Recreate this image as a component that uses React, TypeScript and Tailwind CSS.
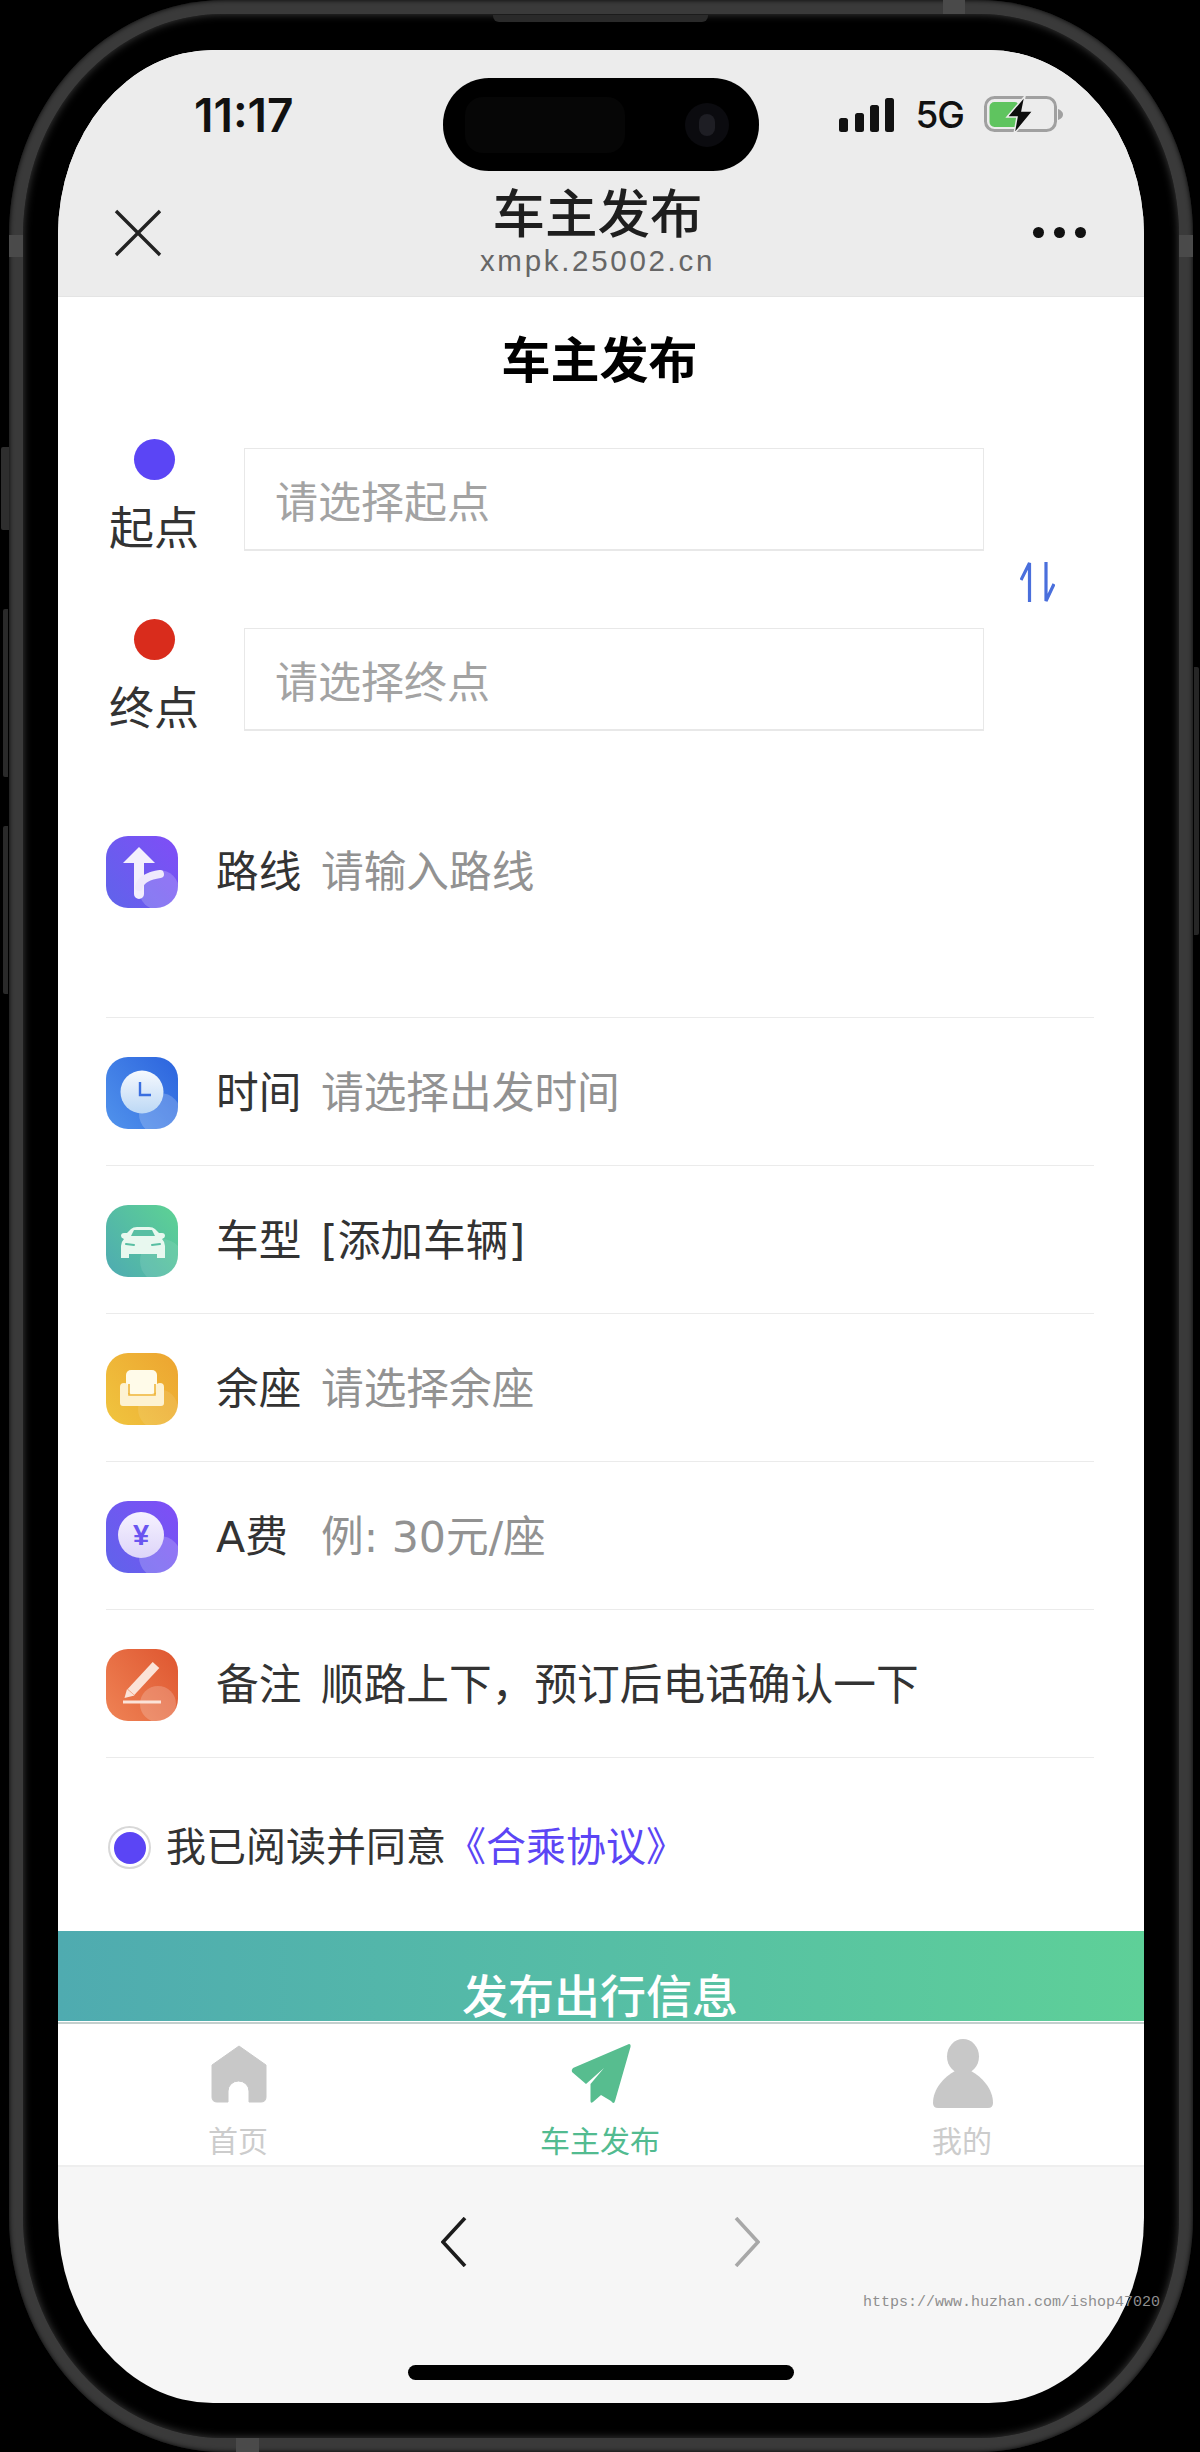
import React from "react";

function Tile({ id, from, to, overlay, cx, cy, r, children }: { id: string; from: string; to: string; overlay: number; cx: number; cy: number; r: number; children: React.ReactNode }) {
  return (
    <svg width="72" height="72" viewBox="0 0 72 72" className="shrink-0">
      <defs>
        <linearGradient id={id} x1="0" y1="1" x2="1" y2="0.2">
          <stop offset="0" stopColor={from} />
          <stop offset="1" stopColor={to} />
        </linearGradient>
        <clipPath id={id + "c"}>
          <rect width="72" height="72" rx="22" />
        </clipPath>
      </defs>
      <rect width="72" height="72" rx="22" fill={`url(#${id})`} />
      <g clipPath={`url(#${id}c)`}>
        <circle cx={cx} cy={cy} r={r} fill="#fff" opacity={overlay} />
      </g>
      {children}
    </svg>
  );
}

const RouteIcon = () => (
  <Tile id="t1" from="#5f64ea" to="#7d4ff6" overlay={0.2} cx={53} cy={54} r={20}>
    <path d="M33 11 L49 27 H38 V58 a5 5 0 0 1 -10 0 V27 H17 Z" fill="#f3effd" strokeLinejoin="round" />
    <path d="M33 51 Q35 41 54 38" fill="none" stroke="#efe9fc" strokeWidth="8" strokeLinecap="round" />
  </Tile>
);
const ClockIcon = () => (
  <Tile id="t2" from="#5193ec" to="#2f68df" overlay={0.2} cx={54} cy={57} r={21}>
    <defs>
      <linearGradient id="t2f" x1="0" y1="0" x2="0" y2="1">
        <stop offset="0" stopColor="#f6f9fe" />
        <stop offset="1" stopColor="#bcd8f5" />
      </linearGradient>
    </defs>
    <circle cx="36" cy="35" r="21.5" fill="url(#t2f)" />
    <path d="M34 25 V38 H45" fill="none" stroke="#3a6fe0" strokeWidth="2.4" />
  </Tile>
);
const CarIcon = () => (
  <Tile id="t3" from="#4eaab2" to="#5ccf96" overlay={0.1} cx={56} cy={56} r={22}>
    <path d="M15 31 Q15 28 18 28 H21 L25 24 Q27 22 31 22 H43 Q47 22 49 24 L53 28 H56 Q59 28 59 31 Q59 33 56 34 Q59 37 59 41 V53 H51 V49 H23 V53 H15 V41 Q15 37 18 34 Q15 33 15 31 Z" fill="#e8f8ef" />
    <path d="M25 31 L28 25 H46 L49 31 Z" fill="#58bfa3" />
    <path d="M20 39 L28 40 M46 40 L54 39" stroke="#58bfa3" strokeWidth="2" strokeLinecap="round" />
  </Tile>
);
const SofaIcon = () => (
  <Tile id="t4" from="#f0c53f" to="#eda731" overlay={0.1} cx={52} cy={56} r={20}>
    <rect x="20" y="17" width="31" height="24" rx="5" fill="#fffbe9" />
    <path d="M14 34 Q14 30 18 30 Q22 30 22 34 V41 H50 V34 Q50 30 54 30 Q58 30 58 34 V50 Q58 53 55 53 H17 Q14 53 14 50 Z" fill="#fdf2d2" />
    <path d="M23 31 V42 H49 V31" fill="none" stroke="#efb63c" strokeWidth="1.6" />
  </Tile>
);
const YenIcon = () => (
  <Tile id="t5" from="#5f64ea" to="#7d4ff6" overlay={0.2} cx={54} cy={56} r={21}>
    <defs>
      <linearGradient id="t5f" x1="0" y1="0" x2="0" y2="1">
        <stop offset="0" stopColor="#f6f2ff" />
        <stop offset="1" stopColor="#ddd5f9" />
      </linearGradient>
    </defs>
    <circle cx="35" cy="34" r="23" fill="url(#t5f)" />
    <text x="35" y="44" textAnchor="middle" fontSize="29" fontWeight="700" fill="#6a55f0" fontFamily="'Liberation Sans',sans-serif">¥</text>
  </Tile>
);
const PenIcon = () => (
  <Tile id="t6" from="#ef8355" to="#e05a33" overlay={0.2} cx={52} cy={55} r={18}>
    <path d="M50 16 L25 43" stroke="#fbe3d8" strokeWidth="9" strokeLinecap="butt" />
    <path d="M18.5 49 L21 40 L28.5 46.5 Z" fill="#fbe3d8" />
    <path d="M17 53 H55" stroke="#fbe3d8" strokeWidth="3" />
  </Tile>
);

function Row({ icon, label, value, dark, first }: { icon: React.ReactNode; label: string; value: string; dark?: boolean; first?: boolean }) {
  return (
    <div className={first ? "h-[182px] border-b border-[#ebebeb]" : "h-[148px] pt-[39px] border-b border-[#ebebeb]"}>
      <div className="flex items-center h-[72px] font-['DejaVu_Sans','Noto_Sans_CJK_SC',sans-serif]">
        {icon}
        <div className="ml-[38px] w-[105px] shrink-0 text-[42.7px] leading-[60px] text-[#333]">{label}</div>
        <div className={dark ? "text-[42.7px] leading-[60px] text-[#333] whitespace-nowrap" : "text-[42.7px] leading-[60px] text-[#929292] whitespace-nowrap"}>{value}</div>
      </div>
    </div>
  );
}

function Place({ dot, label, placeholder, spaced }: { dot: string; label: string; placeholder: string; spaced?: boolean }) {
  return (
    <div className={spaced ? "flex items-start mt-[68px]" : "flex items-start"}>
      <div className="w-[90px] flex flex-col items-center shrink-0">
        <div className={dot + " w-[41px] h-[41px] rounded-full"} />
        <div className="mt-[23px] text-[45px] leading-[46px] text-[#333] whitespace-nowrap">{label}</div>
      </div>
      <div className="ml-[45px] mt-[9px] w-[740px] h-[103px] border border-b-2 border-[#e8e8e8] pl-[30px] flex items-center text-[43px] text-[#a3a3a3]">
        {placeholder}
      </div>
    </div>
  );
}

function Tab({ label, active, children }: { label: string; active?: boolean; children: React.ReactNode }) {
  return (
    <div className="flex-1 flex flex-col items-center pt-[15px]">
      <div className="w-[70px] h-[70px]">{children}</div>
      <div className={active ? "mt-[15px] mr-[2px] text-[30px] leading-[30px] text-[#52bb90]" : "mt-[15px] mr-[2px] text-[30px] leading-[30px] text-[#cccccc]"}>{label}</div>
    </div>
  );
}

export default function App() {
  return (
    <div className="relative w-[1200px] h-[2452px] bg-black overflow-hidden pl-[9px] pr-[7px] font-['Noto_Sans_CJK_SC','Liberation_Sans',sans-serif]">
      {/* side buttons */}
      <div className="absolute left-[1px] top-[447px] w-[8px] h-[83px] rounded-l-[2px] bg-[#2e2e2e]" />
      <div className="absolute left-[3px] top-[609px] w-[5px] h-[168px] rounded-l-[2px] bg-[#2a2a2a]" />
      <div className="absolute left-[3px] top-[826px] w-[5px] h-[168px] rounded-l-[2px] bg-[#2a2a2a]" />
      <div className="absolute right-[1px] top-[667px] w-[5px] h-[268px] rounded-r-[2px] bg-[#262626]" />

      {/* bezel */}
      <div className="h-full p-[14px] rounded-[215px/235px] bg-[#3a3a3a] shadow-[inset_0_0_5px_rgba(0,0,0,0.95)]">
        <div className="h-full pt-[36px] pb-[35px] px-[35px] rounded-[200px/222px] bg-black shadow-[inset_0_0_9px_rgba(80,80,80,0.8)]">
          {/* screen */}
          <div className="h-full flex flex-col overflow-hidden rounded-[155px/185px] bg-[#f6f6f6]">
            {/* header */}
            <div className="h-[247px] shrink-0 bg-[#ececec] border-b border-[#e4e4e4] flex flex-col">
              <div className="flex items-center justify-between h-[130px] pl-[136px] pr-[81px]">
                <div className="text-[46px] leading-[50px] font-semibold text-[#111] font-['Inter',sans-serif]">11:17</div>
                <div className="flex items-center">
                  <svg width="55" height="34" viewBox="0 0 55 34">
                    <rect x="0" y="20" width="9" height="14" rx="2.5" fill="#111" />
                    <rect x="16" y="15" width="9" height="19" rx="2.5" fill="#111" />
                    <rect x="31" y="7" width="9" height="27" rx="2.5" fill="#111" />
                    <rect x="46" y="0" width="9" height="34" rx="2.5" fill="#111" />
                  </svg>
                  <div className="ml-[21px] text-[37px] leading-[40px] font-medium text-[#111] font-['Inter',sans-serif] tracking-[-1px]">5G</div>
                  <svg className="ml-[20px]" width="79" height="38" viewBox="0 0 79 38">
                    <rect x="1.5" y="1.5" width="70" height="33" rx="9" fill="none" stroke="#a0a0a0" strokeWidth="3" />
                    <rect x="5.5" y="6" width="30" height="25" rx="5" fill="#5fc45f" />
                    <path d="M74 13 Q79 15 79 18.5 Q79 22 74 24 Z" fill="#a0a0a0" />
                    <polygon points="41,0 23,21 33,21 30,38 49,15 38,15" fill="#0d0d0d" stroke="#ececec" strokeWidth="1.5" />
                  </svg>
                </div>
              </div>
              <div className="grid grid-cols-[1fr_auto_1fr] items-start px-[56px]">
                <div className="pt-[29px]">
                  <svg width="48" height="48" viewBox="0 0 48 48">
                    <path d="M2 2 L46 46 M46 2 L2 46" stroke="#222" strokeWidth="3.4" fill="none" />
                  </svg>
                </div>
                <div className="flex flex-col items-center mr-[7px]">
                  <div className="text-[52.5px] leading-[60px] font-medium text-[#1e1e1e] whitespace-nowrap">车主发布</div>
                  <div className="mt-[5px] text-[29.5px] leading-[32px] tracking-[2.7px] text-[#666] font-['Liberation_Sans',sans-serif]">xmpk.25002.cn</div>
                </div>
                <div className="flex justify-end gap-[10px] pt-[47px] pr-[2px]">
                  <div className="w-[11px] h-[11px] rounded-full bg-[#111]" />
                  <div className="w-[11px] h-[11px] rounded-full bg-[#111]" />
                  <div className="w-[11px] h-[11px] rounded-full bg-[#111]" />
                </div>
              </div>
            </div>

            {/* body */}
            <div className="flex-1 min-h-0 bg-white">
              <div className="pt-[30px] text-center text-[49px] leading-[60px] font-bold text-black pr-[3px]">车主发布</div>
              <div className="mt-[52px] pl-[51px] flex items-center">
                <div>
                  <Place dot="bg-[#5b45f5]" label="起点" placeholder="请选择起点" />
                  <Place dot="bg-[#d92c1c]" label="终点" placeholder="请选择终点" spaced />
                </div>
                <svg className="ml-[36px] mb-[6px]" width="35" height="40" viewBox="0 0 35 40">
                  <path d="M1 18 L9.5 1 V40 M26 0 V39 L34 22" fill="none" stroke="#4a6fdc" strokeWidth="3.2" />
                </svg>
              </div>

              <div className="mt-[105px] ml-[48px] mr-[50px]">
                <Row first icon={<RouteIcon />} label="路线" value="请输入路线" />
                <Row icon={<ClockIcon />} label="时间" value="请选择出发时间" />
                <Row icon={<CarIcon />} label="车型" value="[添加车辆]" dark />
                <Row icon={<SofaIcon />} label="余座" value="请选择余座" />
                <Row icon={<YenIcon />} label="A费" value="例: 30元/座" />
                <Row icon={<PenIcon />} label="备注" value="顺路上下，预订后电话确认一下" dark />
              </div>

              <div className="mt-[65px] ml-[50px] flex items-center">
                <div className="w-[43px] h-[43px] rounded-full border-2 border-[#d8d8d8] flex items-center justify-center">
                  <div className="w-[32px] h-[32px] rounded-full bg-[#5b45f5]" />
                </div>
                <div className="ml-[15px] mb-[6px] text-[40px] leading-[43px] text-[#333] whitespace-nowrap">
                  我已阅读并同意<span className="text-[#5b45f5]">《合乘协议》</span>
                </div>
              </div>

              <div className="mt-[59px] h-[90px] pt-[37px] text-center bg-gradient-to-r from-[#4fabb0] to-[#5ed098] text-[46px] leading-[50px] font-medium text-white pr-[2px]">
                发布出行信息
              </div>
            </div>

            {/* tab bar */}
            <div className="h-[145px] shrink-0 flex bg-white border-t-2 border-b-2 border-t-[#c3cfcd] border-b-[#eeeeee]">
              <Tab label="首页">
                <svg width="70" height="70" viewBox="0 0 70 70">
                  <path d="M35 7 L62 26 V58 Q62 63 57 63 H45 V52 A10.5 10 0 0 0 24 52 V63 H13 Q8 63 8 58 V26 Z" fill="#c8c8c8" stroke="#c8c8c8" strokeWidth="1" strokeLinejoin="round" />
                </svg>
              </Tab>
              <Tab label="车主发布" active>
                <svg width="70" height="70" viewBox="0 0 70 70">
                  <path d="M63 5 Q65 5 64.5 8 L49 62 Q48 66 45 62 L35 56 L27 63 Q24.5 65 24.5 62 L24.5 45 L38 29 L20 45 L6 33 Q5 31 7 29 Z" fill="#57bd8f" />
                </svg>
              </Tab>
              <Tab label="我的">
                <svg width="70" height="70" viewBox="0 0 70 70">
                  <ellipse cx="35" cy="17.5" rx="16" ry="17.5" fill="#c8c8c8" />
                  <path d="M27 32 C16 38 5 50 5 64 Q5 69 10 69 H60 Q65 69 65 64 C65 50 54 38 43 32 Z" fill="#c8c8c8" />
                </svg>
              </Tab>
            </div>

            {/* browser bar */}
            <div className="h-[236px] shrink-0 flex flex-col items-center">
              <div className="flex gap-[267px] mt-[50px] mr-[2px]">
                <svg width="26" height="50" viewBox="0 0 26 50">
                  <path d="M24 1 L2 25 L24 49" fill="none" stroke="#1c1c1c" strokeWidth="3.6" />
                </svg>
                <svg width="26" height="50" viewBox="0 0 26 50">
                  <path d="M2 1 L24 25 L2 49" fill="none" stroke="#a8a8a8" strokeWidth="3.6" />
                </svg>
              </div>
              <div className="mt-[98px] w-[386px] h-[15px] rounded-full bg-black" />
            </div>
          </div>
        </div>
      </div>

      {/* dynamic island */}
      <div className="absolute left-[443px] top-[78px] w-[316px] h-[93px] rounded-[46px] bg-black flex items-center justify-between pl-[22px] pr-[30px]">
        <div className="w-[160px] h-[56px] rounded-[18px] bg-[#060606]" />
        <div className="w-[44px] h-[44px] rounded-full bg-[#0b0b0f] flex items-center justify-center">
          <div className="w-[16px] h-[22px] rounded-full bg-[#1e1e24]" />
        </div>
      </div>
      {/* frame details */}
      <div className="absolute left-[493px] top-[15px] w-[215px] h-[7px] rounded-b-[6px] bg-[#2a2a2a]" />
      <div className="absolute left-[943px] top-0 w-[22px] h-[14px] bg-[#4a4a4a]" />
      <div className="absolute left-[9px] top-[235px] w-[14px] h-[22px] bg-[#4a4a4a]" />
      <div className="absolute right-[7px] top-[235px] w-[14px] h-[22px] bg-[#4a4a4a]" />
      <div className="absolute left-[236px] bottom-0 w-[23px] h-[14px] bg-[#4a4a4a]" />

      {/* watermark */}
      <div className="absolute left-[863px] top-[2294px] text-[15px] leading-[18px] text-[#8e8e8e] whitespace-nowrap font-['Liberation_Mono',monospace]">https://www.huzhan.com/ishop47020</div>
    </div>
  );
}
